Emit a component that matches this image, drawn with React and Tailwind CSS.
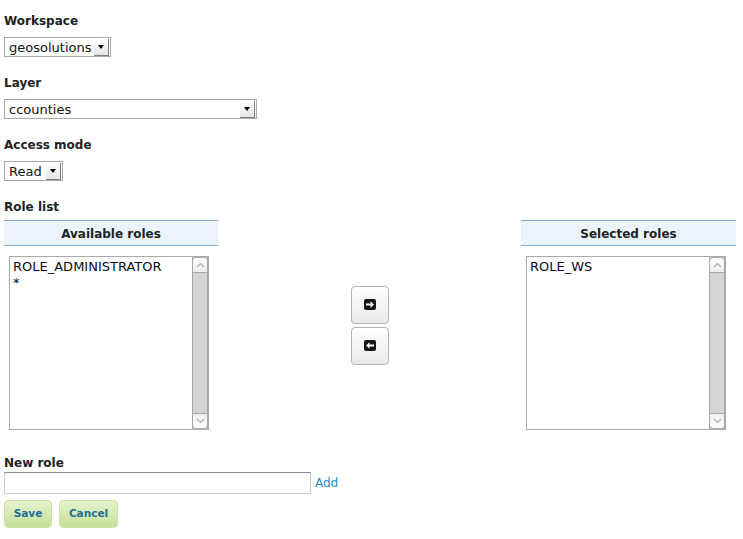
import React from "react";

const Label = ({ children, className = "" }) => (
    <div className={`h-[16px] text-[12px] font-bold leading-[16px] text-[#222] ${className}`}>
        {children}
    </div>
);

const Select = ({ value, width }) => (
    <div className={`mt-[8px] flex h-[20px] items-center border border-[#a9a9a9] bg-white ${width}`}>
        <span className="flex-1 pl-[4px] text-[13px] leading-none text-[#111]">{value}</span>
        <span className="mr-[1px] flex h-[17px] w-[15px] items-center justify-center border-r border-b border-[#808080] bg-gradient-to-b from-white to-[#e4e4e4]">
            <span className="h-0 w-0 border-x-[3px] border-t-[4px] border-x-transparent border-t-black" />
        </span>
    </div>
);

const Chevron = ({ up }) => (
    <svg width="9" height="6" viewBox="0 0 9 6">
        <path
            d={up ? "M1 5 L4.5 1.5 L8 5" : "M1 1 L4.5 4.5 L8 1"}
            fill="none"
            stroke="#b0b0b0"
            strokeWidth="1.2"
        />
    </svg>
);

const Scrollbar = () => (
    <div className="flex w-[16px] flex-col border-x border-[#a8a8a8] bg-[#d4d4d4]">
        <div className="-mx-px flex h-[16px] items-center justify-center rounded-t-[4px] border border-[#a8a8a8] bg-gradient-to-b from-white to-[#ededed]">
            <Chevron up />
        </div>
        <div className="flex-1" />
        <div className="-mx-px flex h-[16px] items-center justify-center rounded-b-[4px] border border-[#a8a8a8] bg-gradient-to-b from-[#ededed] to-white">
            <Chevron />
        </div>
    </div>
);

const ListBox = ({ items }) => (
    <div className="ml-[5px] mt-[10px] flex h-[174px] w-[200px] border border-[#aaaaaa] bg-white">
        <ul className="flex-1 pl-[3px] pt-[2px] text-[13px] leading-[16px] text-[#0a0a1e]">
            {items.map((item) => (
                <li key={item}>{item}</li>
            ))}
        </ul>
        <Scrollbar />
    </div>
);

const Header = ({ children }) => (
    <div className="flex h-[26px] items-center justify-center border-y border-[#7fa6d4] bg-[#ebf4fd] pt-[1px] text-[12px] font-bold text-[#222]">
        {children}
    </div>
);

const ArrowIcon = ({ left }) => (
    <svg width="12" height="11" viewBox="0 0 12 11">
        <rect x="0" y="0" width="12" height="11" rx="2" fill="#151515" />
        {left ? (
            <path d="M10 4.6 H5.5 V2.2 L2 5.5 L5.5 8.8 V6.4 H10 Z" fill="white" />
        ) : (
            <path d="M2 4.6 H6.5 V2.2 L10 5.5 L6.5 8.8 V6.4 H2 Z" fill="white" />
        )}
    </svg>
);

const MoveButton = ({ left }) => (
    <button className="flex h-[38px] w-[38px] items-center justify-center rounded-[4px] border border-[#b4b4b4] bg-gradient-to-b from-white to-[#e9e9e9]">
        <ArrowIcon left={left} />
    </button>
);

const GreenButton = ({ children, width }) => (
    <button className={`flex h-[28px] items-center justify-center rounded-[4px] border border-[#cde2a6] bg-gradient-to-b from-[#e6f3cd] to-[#c4df98] text-[10.5px] font-bold text-[#1e6f99] ${width}`}>
        {children}
    </button>
);

export default function App() {
    return (
        <div
            className="min-h-[539px] w-[743px] bg-white px-[4px] pt-[13px]"
            style={{ fontFamily: '"DejaVu Sans", Verdana, sans-serif' }}
        >
            <Label>Workspace</Label>
            <Select value="geosolutions" width="w-[107px]" />

            <Label className="mt-[18px]">Layer</Label>
            <Select value="ccounties" width="w-[253px]" />

            <Label className="mt-[18px]">Access mode</Label>
            <Select value="Read" width="w-[59px]" />

            <Label className="mt-[18px]">Role list</Label>

            <div className="mt-[5px] grid w-[732px] grid-cols-[214px_1fr_215px]">
                <div>
                    <Header>Available roles</Header>
                    <ListBox items={["ROLE_ADMINISTRATOR", "*"]} />
                </div>
                <div className="flex flex-col items-center justify-center gap-[3px]">
                    <MoveButton />
                    <MoveButton left />
                </div>
                <div>
                    <Header>Selected roles</Header>
                    <ListBox items={["ROLE_WS"]} />
                </div>
            </div>

            <Label className="mt-[25px]">New role</Label>
            <div className="mt-[1px] flex items-center gap-[4px]">
                <input
                    type="text"
                    className="h-[22px] w-[307px] border border-[#c8c8c8] border-t-[#8c8c8c] bg-white outline-none"
                />
                <a href="#" className="text-[12px] text-[#2a8ccb]">Add</a>
            </div>

            <div className="mt-[6px] flex gap-[7px]">
                <GreenButton width="w-[48px]">Save</GreenButton>
                <GreenButton width="w-[59px]">Cancel</GreenButton>
            </div>
        </div>
    );
}
